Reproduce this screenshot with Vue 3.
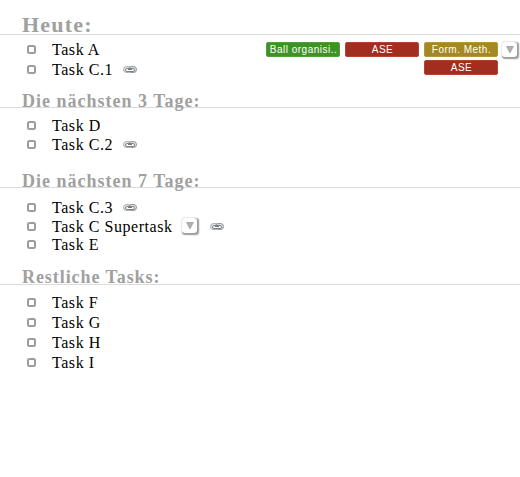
<script setup>
const sections = [
  {
    title: 'Heute:',
    id: 'today',
    tasks: [
      {
        name: 'Task A',
        tagColumns: [
          [{ label: 'Ball organisi..', color: 'green' }],
          [{ label: 'ASE', color: 'red' }],
          [{ label: 'Form. Meth.', color: 'gold' }, { label: 'ASE', color: 'red' }],
        ],
      },
      { name: 'Task C.1', link: true },
    ],
  },
  { title: 'Die nächsten 3 Tage:', id: 'three', tasks: [{ name: 'Task D' }, { name: 'Task C.2', link: true }] },
  {
    title: 'Die nächsten 7 Tage:',
    id: 'seven',
    tasks: [{ name: 'Task C.3', link: true }, { name: 'Task C Supertask', expand: true, link: true }, { name: 'Task E' }],
  },
  { title: 'Restliche Tasks:', id: 'rest', tasks: [{ name: 'Task F' }, { name: 'Task G' }, { name: 'Task H' }, { name: 'Task I' }] },
]
</script>

<template>
  <main class="board">
    <section v-for="s in sections" :key="s.id" :class="s.id">
      <h2><span>{{ s.title }}</span></h2>
      <ul>
        <li v-for="t in s.tasks" :key="t.name">
          <span class="check"></span>
          <span class="name" :class="{ long: t.expand, dotted: t.name.includes('.') }">{{ t.name }}</span>
          <span v-if="t.expand" class="drop inline">
            <svg width="8" height="7" viewBox="0 0 8 7"><path d="M0 0H8L4.5 7H3.5Z" fill="#acacac" /></svg>
          </span>
          <svg v-if="t.link" class="link" width="14" height="8" viewBox="0 0 14 8" fill="none">
            <rect x="0.5" y="0.5" width="8" height="6" rx="3" fill="#e6e8ea" stroke="#a9acae" />
            <rect x="5.5" y="0.5" width="8" height="6" rx="3" fill="#dfe2e4" stroke="#8a8e91" />
            <rect x="2.5" y="2.5" width="9" height="3" rx="1.5" fill="#fff" stroke="#7d8184" />
            <path d="M5 3.5H9" stroke="#73787c" />
          </svg>
          <div v-if="t.tagColumns" class="tags">
            <div v-for="(col, i) in t.tagColumns" :key="i" class="col">
              <span v-for="tag in col" :key="tag.label" class="tag" :class="tag.color">{{ tag.label }}</span>
            </div>
            <span class="drop">
              <svg width="8" height="7" viewBox="0 0 8 7"><path d="M0 0H8L4.5 7H3.5Z" fill="#acacac" /></svg>
            </span>
          </div>
        </li>
      </ul>
    </section>
  </main>
</template>

<style>
body {
  margin: 0;
  background: #fff;
}
</style>

<style scoped>
.board {
  width: 520px;
  height: 477px;
  overflow: hidden;
  font-family: 'Liberation Serif', 'Times New Roman', serif;
  background: #fff;
}
h2 {
  box-sizing: border-box;
  margin: 0;
  padding-left: 22px;
  display: flex;
  align-items: flex-end;
  border-bottom: 1px solid #dcdcdc;
  color: #a0a0a0;
  font-size: 18px;
  line-height: 18px;
  font-weight: bold;
  letter-spacing: 1px;
  white-space: nowrap;
}
h2 span {
  margin-bottom: -3px;
}
.today h2 {
  height: 35px;
  font-size: 22px;
  line-height: 22px;
  letter-spacing: 1.2px;
}
.today h2 span {
  margin-bottom: -2px;
}
.three h2 {
  height: 28px;
}
.seven h2 {
  height: 34px;
}
.rest h2 {
  height: 32px;
  letter-spacing: 0.93px;
}
.rest h2 span {
  margin-bottom: -2px;
}
ul {
  list-style: none;
  margin: 0;
  padding: 5px 0 0;
}
.three ul,
.rest ul {
  padding-top: 8px;
}
.seven ul {
  padding-top: 10px;
}
li {
  display: flex;
  align-items: flex-start;
  height: 20px;
  padding-left: 27px;
}
.three li {
  height: 19px;
}
.seven li {
  height: 18px;
}
.seven li:first-child {
  height: 19px;
}
.check {
  box-sizing: border-box;
  width: 9px;
  height: 9px;
  margin: 5px 16px 0 0;
  border: 2px solid #9c9c9c;
  border-radius: 2.5px;
  flex: none;
}
.name {
  font-size: 16px;
  line-height: 20px;
  letter-spacing: 0.55px;
  color: #000;
  white-space: nowrap;
}
.dotted {
  width: 71px;
}
.long {
  width: 130px;
}
.link {
  margin-top: 6px;
  flex: none;
}
.drop {
  box-sizing: border-box;
  width: 15px;
  height: 15px;
  display: flex;
  justify-content: center;
  padding-top: 4px;
  border-radius: 3px;
  background: #fff;
  box-shadow: 1px 1px 1.5px 0.3px #999;
  flex: none;
}
.drop.inline {
  margin: 1px 13px 0 0;
}
.tags {
  display: flex;
  gap: 5px;
  margin: 2px 2px 0 auto;
}
.tags .drop {
  margin-left: -1px;
  margin-right: 1px;
}
.col {
  display: flex;
  flex-direction: column;
  gap: 3px;
}
.tag {
  box-sizing: border-box;
  width: 74px;
  height: 15px;
  padding-left: 1px;
  border: 1px solid;
  border-radius: 2px;
  font: 10px/13px 'Liberation Sans', Arial, sans-serif;
  letter-spacing: 0.5px;
  text-align: center;
  white-space: nowrap;
  color: #fff;
}
.green {
  background: #3f9227;
  border-color: #519f3a;
}
.red {
  background: #a02f20;
  border-color: #b04334;
}
.gold {
  background: #a48824;
  border-color: #b39839;
}
</style>
